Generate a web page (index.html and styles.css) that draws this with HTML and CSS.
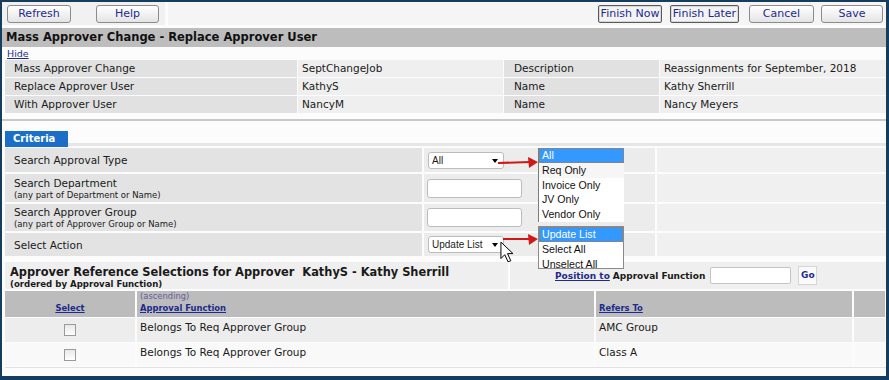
FILE: index.html
```html
<!DOCTYPE html>
<html>
<head>
<meta charset="utf-8">
<link rel="stylesheet" href="styles.css">
</head>
<body>
<div class="frame">
  <div class="toolbar">
    <div class="tb-left">
      <button class="btn w64">Refresh</button>
      <button class="btn w63">Help</button>
    </div>
    <div class="tb-right">
      <button class="btn2 fn">Finish Now</button>
      <button class="btn2 fl">Finish Later</button>
      <button class="btn cancel">Cancel</button>
      <button class="btn save">Save</button>
    </div>
  </div>
  <div class="titlebar">Mass Approver Change - Replace Approver User</div>
  <div class="hide"><a href="#">Hide</a></div>
  <div class="info">
    <div class="lab">Mass Approver Change</div><div class="val">SeptChangeJob</div><div class="lab2">Description</div><div class="val">Reassignments for September, 2018</div>
    <div class="lab">Replace Approver User</div><div class="val">KathyS</div><div class="lab2">Name</div><div class="val">Kathy Sherrill</div>
    <div class="lab">With Approver User</div><div class="val">NancyM</div><div class="lab2">Name</div><div class="val">Nancy Meyers</div>
  </div>
  <div class="criteria">
    <div class="tabrow"><span class="tab">Criteria</span></div>
    <div class="crit">
      <div class="clab r1">Search Approval Type</div>
      <div class="cctl"><div class="sel">All<span class="tri"></span></div></div>
      <div class="cext"></div>
      <div class="clab r2">Search Department<small>(any part of Department or Name)</small></div>
      <div class="cctl"><div class="inp"></div></div>
      <div class="cext"></div>
      <div class="clab r3">Search Approver Group<small>(any part of Approver Group or Name)</small></div>
      <div class="cctl"><div class="inp"></div></div>
      <div class="cext"></div>
      <div class="clab r4">Select Action</div>
      <div class="cctl"><div class="sel">Update List<span class="tri"></span></div></div>
      <div class="cext"></div>
    </div>
  </div>
  <div class="sect">
    <div class="sect-l">
      <div class="sect-t">Approver Reference Selections for Approver&nbsp; KathyS - Kathy Sherrill</div>
      <div class="sect-s">(ordered by Approval Function)</div>
    </div>
    <div class="sect-r">
      <a href="#" class="lnk">Position to</a><b class="pf">Approval Function</b><span class="pinp"></span><span class="go">Go</span>
    </div>
  </div>
  <div class="data">
    <div class="hd c1"><a href="#" class="lnk">Select</a></div>
    <div class="hd c2"><span class="asc">(ascending)</span><a href="#" class="lnk">Approval Function</a></div>
    <div class="hd c3"><a href="#" class="lnk">Refers To</a></div>
    <div class="hd c4"></div>
    <div class="td a ck"><span class="cb"></span></div>
    <div class="td a">Belongs To Req Approver Group</div>
    <div class="td a">AMC Group</div>
    <div class="td a"></div>
    <div class="td b ck"><span class="cb"></span></div>
    <div class="td b">Belongs To Req Approver Group</div>
    <div class="td b">Class A</div>
    <div class="td b"></div>
  </div>

  <div class="dd dd1">
    <div class="opt on">All</div>
    <div class="opt g">Req Only</div>
    <div class="opt">Invoice Only</div>
    <div class="opt">JV Only</div>
    <div class="opt">Vendor Only</div>
  </div>
  <div class="dd dd2">
    <div class="opt on">Update List</div>
    <div class="opt">Select All</div>
    <div class="opt">Unselect All</div>
  </div>
  <svg class="arrows" width="884" height="374" viewBox="0 0 884 374">
    <line x1="496" y1="161" x2="528" y2="160" stroke="#d01818" stroke-width="2"/>
    <polygon points="536,160 526,155 527,166" fill="#d01818"/>
    <line x1="501" y1="237" x2="528" y2="237" stroke="#d01818" stroke-width="2"/>
    <polygon points="536,237 526,232 527,243" fill="#d01818"/>
  </svg>
  <svg class="cursor" width="17" height="23" viewBox="0 0 14 21">
    <path d="M1,1 L1,16 L4.5,12.5 L7.5,19 L10,18 L7,11.5 L12,11.5 Z" fill="#fff" stroke="#000" stroke-width="0.9" stroke-linejoin="round"/>
  </svg>
</div>
</body>
</html>
```
FILE: styles.css
```css
html, body { margin: 0; padding: 0; }
body {
  background: #163c5e;
  font-family: "DejaVu Sans", Verdana, sans-serif;
  color: #1a1a1a;
  width: 889px;
  height: 380px;
  overflow: hidden;
}
.frame {
  position: relative;
  margin: 2px 3px 4px 2px;
  width: 884px;
  height: 374px;
  background: #fcfcfc;
  overflow: hidden;
}
a { color: #1d2a8e; }

/* toolbar */
.toolbar { display: flex; height: 23px; margin-bottom: 3px; }
.tb-left {
  width: 163px; background: #f1f1f1; display: flex; align-items: center;
  gap: 25px; padding-left: 5px; margin-right: 3px; box-sizing: border-box;
}
.tb-right {
  flex: 1; background: #f5f5f5; display: flex; align-items: center;
  justify-content: flex-end; padding-right: 3px;
}
.btn, .btn2 {
  height: 18px; padding: 0; font-family: "DejaVu Sans", Verdana, sans-serif;
  font-size: 11px; color: #1d2a8e; line-height: 16px;
}
.btn {
  border: 1px solid #8c8c8c; border-radius: 3px;
  background: linear-gradient(#ffffff, #e4e4e4);
}
.btn2 {
  border: 1px solid #5a5a5a; border-radius: 2px; background: #f3f3f3;
  box-shadow: inset 0 0 0 1px #d8d8d8;
}
.w64 { width: 64px; }
.w63 { width: 63px; }
.fn { width: 64px; margin-right: 8px; }
.fl { width: 69px; margin-right: 10px; }
.cancel { width: 65px; margin-right: 7px; }
.save { width: 62px; }

.titlebar {
  height: 19px; line-height: 19px; background: #bdbdbd; font-weight: bold;
  font-size: 11.5px; padding-left: 4px; color: #111;
}
.hide { height: 13px; line-height: 13px; font-size: 9.5px; padding-left: 5px; }

/* info grid */
.info {
  display: grid; grid-template-columns: 292px 205px 155px 227px;
  column-gap: 1px; row-gap: 1px; margin-left: 3px; font-size: 10.5px;
}
.info > div { height: 17px; line-height: 17px; white-space: nowrap; overflow: hidden; }
.lab { background: #e1e1e1; padding-left: 9px; }
.lab2 { background: #e1e1e1; padding-left: 10px; }
.val { background: #efefef; padding-left: 4px; }

/* criteria */
.criteria { margin-top: 6px; border-top: 2px solid #c9c9c9; padding-top: 6px; }
.tabrow { height: 16px; margin-left: 3px; border-bottom: 3px solid #e6e6e6; margin-bottom: 2px; }
.tab {
  display: inline-block; width: 63px; height: 16px; line-height: 16px; background: #1b6fc6;
  color: #fff; font-weight: bold; font-size: 10px; padding-left: 8px; box-sizing: border-box;
}
.crit {
  display: grid; grid-template-columns: 417px 231px 231px;
  grid-template-rows: 24px 28px 27px 23px; gap: 2px; margin-left: 3px;
}
.clab {
  background: #e3e3e3; padding-left: 9px; font-size: 10.5px; display: flex;
  flex-direction: column; justify-content: center;
}
.clab small { font-size: 8.5px; margin-top: 1px; }
.cctl { background: #ececec; display: flex; align-items: center; padding-left: 3px; }
.cext { background: #f0f0f0; }
.sel {
  width: 76px; height: 17px; box-sizing: border-box; border: 1px solid #bcbcbc; border-radius: 3px;
  background: #fff; font-family: "Liberation Sans", Arial, sans-serif; font-size: 10px;
  line-height: 15px; padding-left: 3px; position: relative; margin-left: 1px;
}
.tri {
  position: absolute; right: 5px; top: 6px; width: 0; height: 0;
  border-left: 3.5px solid transparent; border-right: 3.5px solid transparent; border-top: 4px solid #000;
}
.inp {
  width: 95px; height: 19px; box-sizing: border-box; border: 1px solid #bcbcbc; border-radius: 3px;
  background: #fff;
}

/* section heading */
.sect { display: flex; height: 27px; margin-top: 6px; margin-left: 3px; gap: 2px; }
.sect-l { width: 503px; background: #efefef; padding: 3px 0 0 5px; box-sizing: border-box; }
.sect-t { font-weight: bold; font-size: 11.4px; line-height: 14px; white-space: nowrap; }
.sect-s { font-weight: bold; font-size: 8.6px; line-height: 10px; }
.sect-r {
  flex: 1; background: #efefef; display: flex; align-items: center; padding-left: 45px;
  font-size: 9px;
}
.lnk { font-weight: bold; color: #1d2a8e; text-decoration: underline; }
.pf { margin-left: 3px; }
.pinp {
  width: 81px; height: 17px; box-sizing: border-box; border: 1px solid #c4c4c4; border-radius: 2px;
  background: #fff; margin-left: 5px;
}
.go {
  width: 19px; height: 19px; box-sizing: border-box; border: 1px solid #d6d6d6; background: #fafafa;
  margin-left: 7px; text-align: center; line-height: 17px; font-weight: bold; color: #1d2a8e; font-size: 9px;
}

/* data table */
.data {
  display: grid; grid-template-columns: 130px 457px 256px 31px;
  grid-template-rows: 26px 24px 23px; column-gap: 2px; row-gap: 1px;
  margin-top: 2px; margin-left: 3px; font-size: 10.5px;
  border-bottom: 1px solid #e2e2e2; padding-bottom: 1px;
}
.hd {
  background: #bcbcbc; font-size: 8.4px; display: flex; flex-direction: column; justify-content: flex-end;
  padding: 0 0 4px 3px;
}
.hd.c1 { align-items: center; padding-left: 0; }
.asc { color: #6a5a9c; font-size: 8.4px; line-height: 11px; margin-bottom: 1px; }
.td { padding: 3px 0 0 3px; }
.td.a { background: #ededed; }
.td.b { background: #f9f9f9; }
.td.ck { display: flex; justify-content: center; padding: 6px 0 0 0; }
.cb {
  width: 12px; height: 12px; box-sizing: border-box; border: 1px solid #9a9a9a;
  background: linear-gradient(#e8e8e8, #ffffff); display: block;
}

/* overlays */
.dd {
  position: absolute; left: 536px; width: 86px; background: #fff;
  font-family: "Liberation Sans", Arial, sans-serif; font-size: 10.6px; color: #111;
  border-left: 1px solid #7c7c7c; box-sizing: border-box;
}
.dd1 { top: 146px; }
.dd2 { top: 224px; border: 1px solid #8a8a8a; height: 43px; overflow: hidden; }
.opt { height: 14.8px; line-height: 14.8px; padding-left: 3px; }
.opt.g { background: #f6f6f6; }
.opt.on {
  background: #3399ff; color: #fff; outline: 1px dotted #d07020; outline-offset: -1px;
}
.arrows { position: absolute; left: 0; top: 0; pointer-events: none; }
.cursor { position: absolute; left: 497px; top: 239px; }
```
